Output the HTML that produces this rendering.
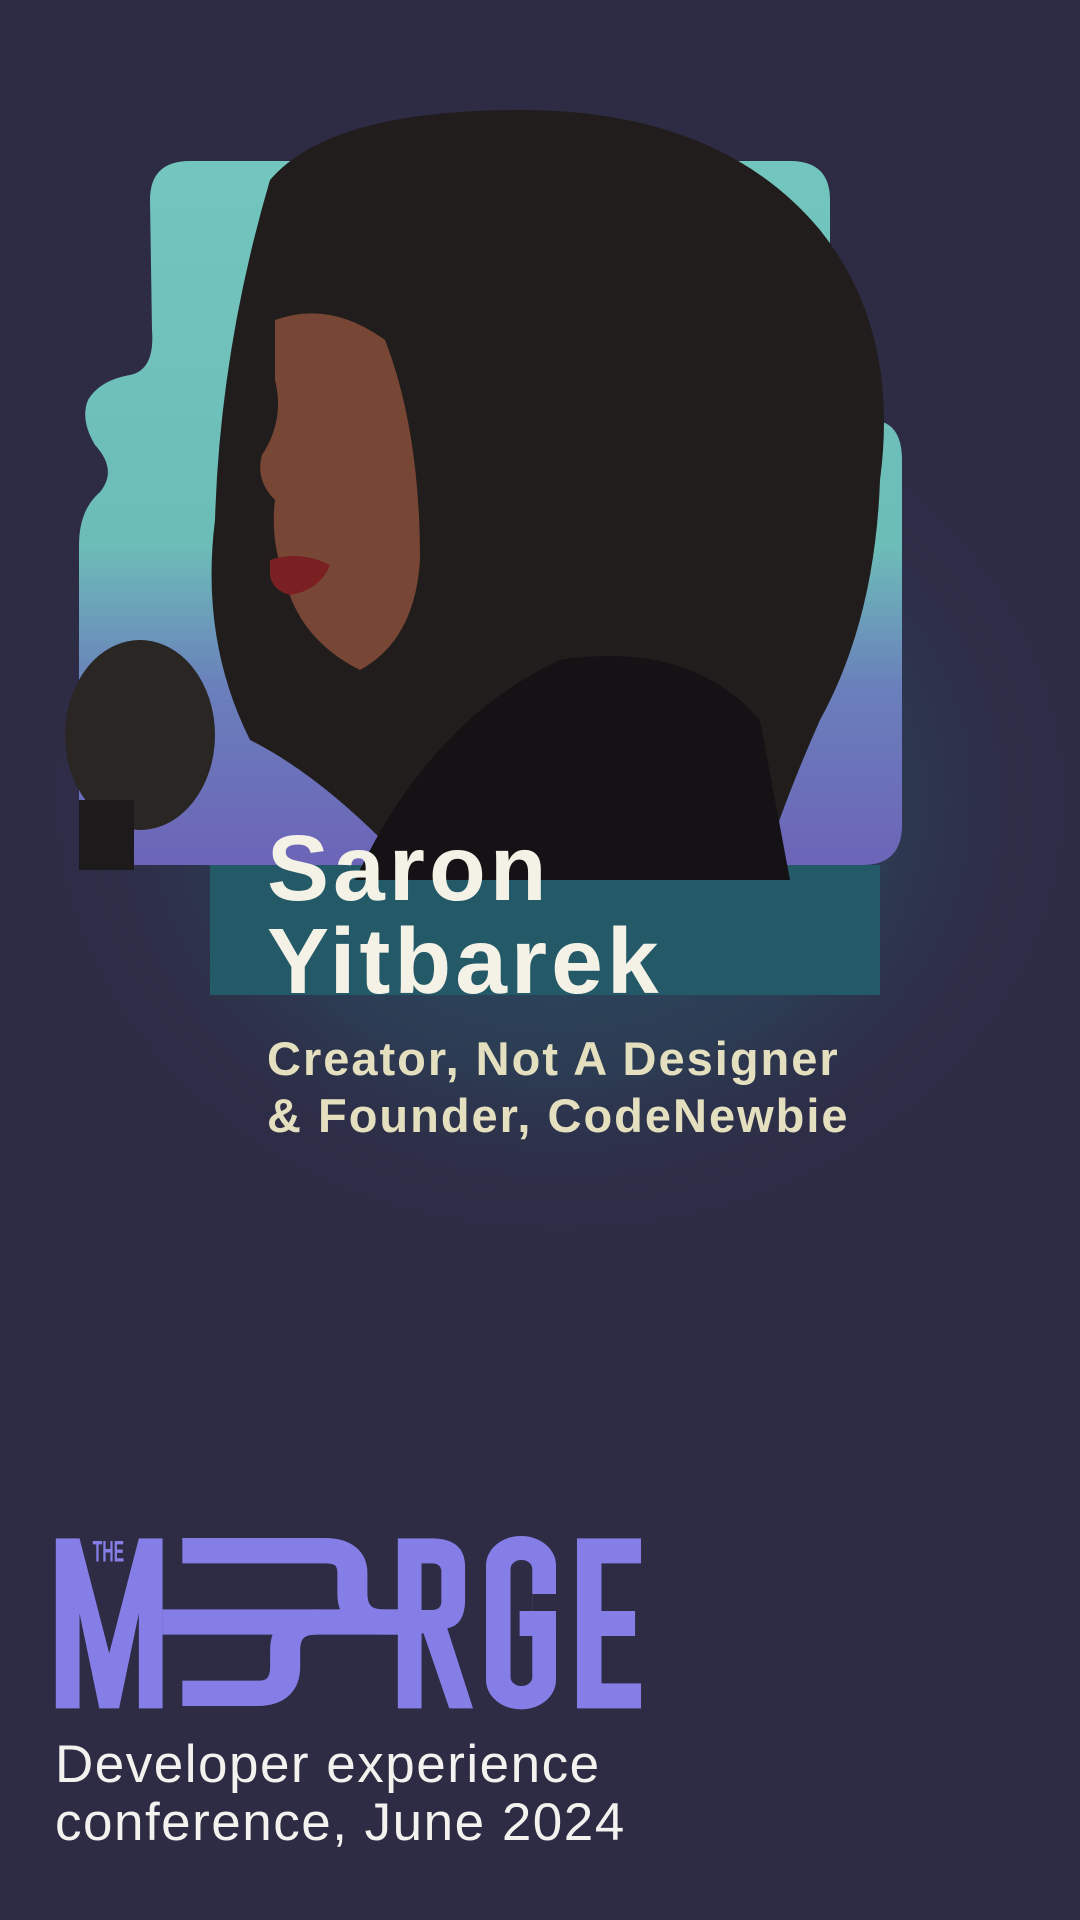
<!DOCTYPE html>
<html><head><meta charset="utf-8"><style>
html,body{margin:0;padding:0}
body{width:1080px;height:1920px;background:#2e2b45;position:relative;overflow:hidden;font-family:"Liberation Sans",sans-serif}
.t{position:absolute;left:267px;color:#f4f2e6;font-weight:700;white-space:nowrap}
</style></head><body>
<svg width="1080" height="1300" style="position:absolute;left:0;top:0">
<defs>
<linearGradient id="sg" x1="0" y1="0" x2="0" y2="1">
<stop offset="0" stop-color="#72c6bd"/><stop offset="0.55" stop-color="#6cbcb8"/><stop offset="0.75" stop-color="#6a7fbb"/><stop offset="1" stop-color="#6c64b8"/></linearGradient>
<radialGradient id="glow" cx="0.5" cy="0.5" r="0.5">
<stop offset="0" stop-color="#2a6070" stop-opacity="0.8"/><stop offset="0.6" stop-color="#2a5468" stop-opacity="0.4"/><stop offset="1" stop-color="#2e2b45" stop-opacity="0"/></radialGradient>
</defs>
<ellipse cx="560" cy="800" rx="540" ry="460" fill="url(#glow)"/>
<rect x="210" y="865" width="670" height="130" fill="#245a68"/>
<path d="M190,161 H790 Q830,161 830,200 V380 Q830,420 870,420 Q902,420 902,460 V825 Q902,865 862,865 H119 Q79,865 79,825 V545 Q79,510 100,492 Q118,470 95,445 Q80,420 88,400 Q100,380 130,375 Q155,370 152,330 L150,200 Q150,161 190,161 Z" fill="url(#sg)"/>
<path d="M270,180 Q330,110 520,110 Q720,110 820,230 Q900,330 880,480 Q875,620 820,720 Q780,810 760,880 L420,880 Q330,780 250,740 Q200,640 215,520 Q220,350 270,180 Z" fill="#221d1d"/>
<path d="M275,320 Q330,300 385,340 Q420,430 420,560 Q415,640 360,670 Q300,640 285,580 Q270,540 275,500 Q255,480 262,455 Q285,420 275,380 Z" fill="#774634"/>
<path d="M270,560 Q300,550 330,565 Q320,590 290,595 Q272,590 270,575 Z" fill="#7a1f22"/>
<path d="M355,880 Q430,720 560,660 Q690,640 760,720 L790,880 Z" fill="#141214"/>
<ellipse cx="140" cy="735" rx="75" ry="95" fill="#2a2624"/>
<rect x="79" y="800" width="55" height="70" fill="#1c1a1a"/>
</svg>
<div class="t" style="top:822px;font-size:93px;line-height:93px;letter-spacing:4px">Saron</div>
<div class="t" style="top:915px;font-size:93px;line-height:93px;letter-spacing:4px">Yitbarek</div>
<div class="t" style="top:1030px;font-size:47px;line-height:57px;color:#e4e0bf;letter-spacing:2px">Creator, Not A Designer<br>&amp; Founder, CodeNewbie</div>
<svg style="position:absolute;left:40px;top:1510px" width="620" height="200" viewBox="0 0 1568 600" preserveAspectRatio="none">
<g fill="#857ee6">
<polygon points="40,595 40,85 100,85 175,430 250,85 310,85 310,595 250,595 250,310 200,595 150,595 100,310 100,595"/>
<path d="M905,85 H990 Q1075,85 1075,170 V270 Q1075,345 1030,355 L1095,595 H1035 L970,370 H965 V595 H905 Z M965,160 V300 H990 Q1015,300 1015,275 V185 Q1015,160 990,160 Z" fill-rule="evenodd"/>
<rect x="1128" y="78" width="177" height="520" rx="88"/>
<polygon points="1358,85 1520,85 1520,160 1420,160 1420,303 1505,303 1505,378 1420,378 1420,520 1520,520 1520,595 1358,595"/>
<text x="133" y="155" font-family="Liberation Sans Narrow,Liberation Sans,sans-serif" font-weight="700" font-size="88" textLength="80" lengthAdjust="spacingAndGlyphs">THE</text>
</g>
<g fill="#2e2b45">
<rect x="1190" y="150" width="55" height="378" rx="27"/>
<rect x="1245" y="252" width="62" height="51"/>
</g>
<rect x="1213" y="303" width="92" height="75" fill="#857ee6"/>
<g fill="none" stroke="#857ee6" stroke-width="76">
<path d="M360,122 H720 Q790,122 790,190 V250 Q790,336 870,336 H905"/>
<path d="M310,336 H905"/>
<path d="M360,550 H550 Q620,550 620,470 V420 Q620,336 700,336"/>
</g>
</svg>
<div style="position:absolute;left:55px;top:1736px;font-size:53px;line-height:58px;color:#f4f2ee;letter-spacing:1.5px">Developer experience<br>conference, June 2024</div>
</body></html>
